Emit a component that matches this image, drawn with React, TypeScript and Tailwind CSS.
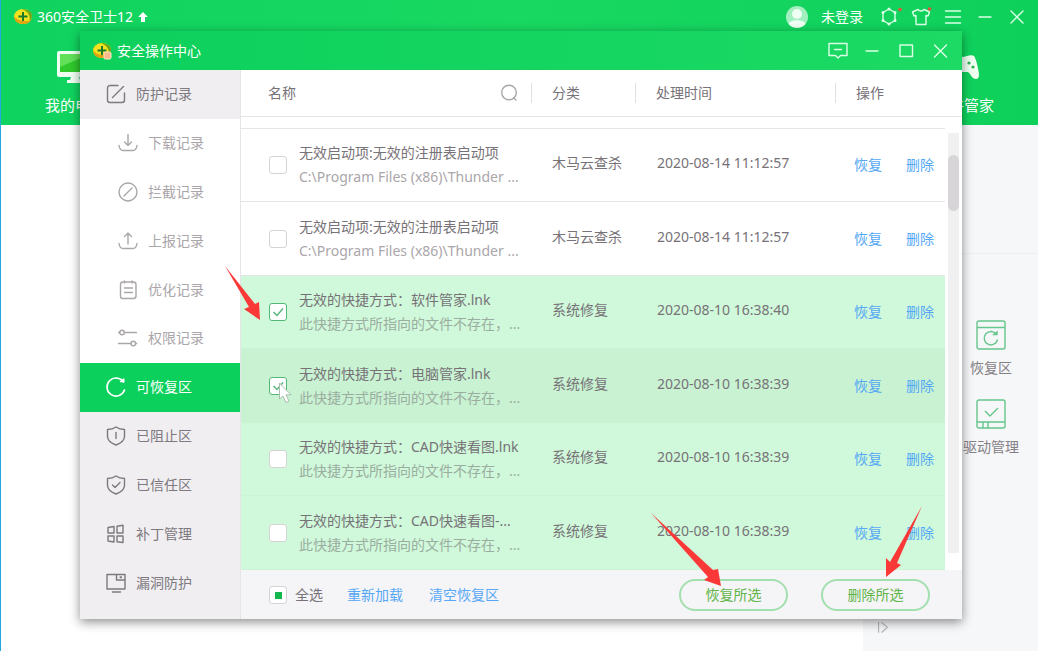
import { useState, type ReactNode } from 'react';
import clsx from 'clsx';

type IconProps = { children: ReactNode; className?: string };

function Icon({ children, className = 'size-5' }: IconProps) {
    return (
        <svg
            viewBox="0 0 20 20"
            fill="none"
            stroke="currentColor"
            strokeWidth="1.4"
            strokeLinecap="round"
            strokeLinejoin="round"
            className={clsx('shrink-0 overflow-visible', className)}
            aria-hidden="true"
        >
            {children}
        </svg>
    );
}

function Logo({ badge = false }: { badge?: boolean }) {
    return (
        <svg viewBox="0 0 20 18" className="h-[18px] w-5 shrink-0" aria-hidden="true">
            <ellipse cx="10" cy="8.5" rx="9" ry="7.5" fill="#f5e21c" />
            <path d="M1 8c0 5 4 8 9 8 4 0 7-1.500 8.500-4.500C15 14 5 14 1 8z" fill="#e0a410" />
            <path d="M9 1c5 0 10 2 10 7 0 2-1 4-2.500 5C18 7 14 3 9 1z" fill="#6ea51a" />
            <path d="M10 4v9M5.500 8.500h9" stroke="#1d7a2c" strokeWidth="2" />
            {badge && <rect x="12" y="10" width="7" height="7" rx="1.500" fill="#ffb98a" stroke="#fde6c8" />}
        </svg>
    );
}

const menu = [
    {
        label: '防护记录',
        icon: <><path d="M12 1.500H4A2.500 2.500 0 0 0 1.500 4v12A2.500 2.500 0 0 0 4 18.500h12a2.500 2.500 0 0 0 2.500-2.500V9M6.500 13.500l11-11" /></>,
    },
    {
        label: '下载记录',
        sub: true,
        icon: <><path d="M10 1.500v11M6.500 9l3.500 3.500L13.500 9M1 12.500c.5 3 2 5 4 5h10c2 0 3.500-2 4-5" /></>,
    },
    {
        label: '拦截记录',
        sub: true,
        icon: <><circle cx="10" cy="10" r="9" /><path d="M6 14l8-8" /></>,
    },
    {
        label: '上报记录',
        sub: true,
        icon: <><path d="M10 13V2M6.500 5.500L10 2l3.500 3.500M1 12.500c.5 3 2 5 4 5h10c2 0 3.500-2 4-5" /></>,
    },
    {
        label: '优化记录',
        sub: true,
        icon: <><rect x="2.500" y="2" width="15.500" height="16.500" rx="2.500" /><path d="M6.500 1v2M14 1v2M6.500 8h8M6.500 12.500h8" /></>,
    },
    {
        label: '权限记录',
        sub: true,
        icon: <><circle cx="4" cy="4.500" r="2.300" /><path d="M6.300 4.500H18.500M.5 4.500h1.200M.5 15.500H13M17.600 15.500h1" /><circle cx="15.300" cy="15.500" r="2.300" /></>,
    },
    {
        label: '可恢复区',
        icon: <><path d="M17.500 5A9 9 0 1 0 18.500 13" strokeWidth="1.700" /><path d="M14.500 4.500h3.300V2z" fill="currentColor" /></>,
    },
    {
        label: '已阻止区',
        icon: <><path d="M10 1c2.500 1.800 5.500 2.500 8.500 2.500v7c0 4-3.500 6.500-8.500 8.500-5-2-8.500-4.500-8.500-8.500v-7C4.500 3.500 7.500 2.800 10 1z" /><path d="M10 6.500v6" /></>,
    },
    {
        label: '已信任区',
        icon: <><path d="M10 1c2.500 1.800 5.500 2.500 8.500 2.500v7c0 4-3.500 6.500-8.500 8.500-5-2-8.500-4.500-8.500-8.500v-7C4.500 3.500 7.500 2.800 10 1z" /><path d="M6.500 10l2.500 2.500 5-5" /></>,
    },
    {
        label: '补丁管理',
        icon: <><path d="M2 3.500L8 2.500v6.500H2zM11 2.300l6-1v7.700h-6zM2 12h6v6l-6-1zM11 12h6v6.500l-6-.8z" /></>,
    },
    {
        label: '漏洞防护',
        icon: <><path d="M1 1.500h18v14.500H1zM10.500 1.500v5.500H19M6.500 19h8" /><path d="M14.500 4.200h.6" strokeWidth="2" /></>,
    },
];

const rows = [
    { title: '无效启动项:无效的注册表启动项', detail: 'C:\\Program Files (x86)\\Thunder ...', kind: '木马云查杀', time: '2020-08-14 11:12:57' },
    { title: '无效启动项:无效的注册表启动项', detail: 'C:\\Program Files (x86)\\Thunder ...', kind: '木马云查杀', time: '2020-08-14 11:12:57' },
    { title: '无效的快捷方式：软件管家.lnk', detail: '此快捷方式所指向的文件不存在，...', kind: '系统修复', time: '2020-08-10 16:38:40', marked: true },
    { title: '无效的快捷方式：电脑管家.lnk', detail: '此快捷方式所指向的文件不存在，...', kind: '系统修复', time: '2020-08-10 16:38:39', marked: true, hover: true },
    { title: '无效的快捷方式：CAD快速看图.lnk', detail: '此快捷方式所指向的文件不存在，...', kind: '系统修复', time: '2020-08-10 16:38:39', marked: true },
    { title: '无效的快捷方式：CAD快速看图-...', detail: '此快捷方式所指向的文件不存在，...', kind: '系统修复', time: '2020-08-10 16:38:39', marked: true },
];

function CheckBox({ label, checked, onChange }: { label: string; checked: boolean; onChange: () => void }) {
    return (
        <span className="relative size-[18px] shrink-0">
            <input
                type="checkbox"
                aria-label={label}
                checked={checked}
                onChange={onChange}
                className="peer block size-[18px] appearance-none rounded-[3px] border border-[#d6d3d6] bg-white checked:border-[#52b876]"
            />
            <svg viewBox="0 0 18 18" className="pointer-events-none absolute inset-0 hidden size-[18px] peer-checked:block" fill="none" stroke="#5cb57c" strokeWidth="1.500">
                <path d="M4.500 9l3.500 3.500 6-7" />
            </svg>
        </span>
    );
}

function MainWindow() {
    return (
        <div className="flex min-h-screen flex-col border-l border-[#22a9e0] bg-white">
            <header className="flex h-[125px] flex-col justify-between bg-linear-to-r from-[#0fd35f] via-[#18d861] to-[#0dd05b] pb-[10px] text-white">
                <div className="flex h-[34px] items-center justify-between pr-[11px] pl-3">
                    <div className="flex items-center gap-1 text-sm">
                        <Logo />
                        <span>360安全卫士12</span>
                        <svg viewBox="0 0 12 12" className="size-3" fill="currentColor" aria-hidden="true"><path d="M6 1l5 5H8v5H4V6H1z" /></svg>
                    </div>
                    <div className="flex items-center text-sm">
                        <svg viewBox="0 0 24 24" className="mr-3 size-6" aria-hidden="true">
                            <circle cx="12" cy="12" r="11" fill="#a2efbf" />
                            <circle cx="12" cy="9" r="5" fill="#effff4" />
                            <path d="M3.500 19c1.500-5 15.500-5 17 0a11.500 11.500 0 0 1-17 0z" fill="#effff4" />
                        </svg>
                        <a href="#login" className="mr-4">未登录</a>
                        <div className="flex items-center gap-3 text-[#dcffe6]">
                            <button type="button" aria-label="消息">
                                <Icon>
                                    <path d="M10 2l6 3.500v8L10 17l-6-3.500v-8z" />
                                    <path d="M10 2v.1M10 17v.1M16 5.500v.1M4 5.500v.1M16 13.500v.1M4 13.500v.1" strokeWidth="3" />
                                    <circle cx="21" cy="2.500" r="1.800" fill="#e6553c" stroke="none" />
                                </Icon>
                            </button>
                            <button type="button" aria-label="皮肤">
                                <Icon>
                                    <path d="M7 2.500c1.500 2 4.500 2 6 0L18.500 5 17 9l-2-.5V17.500H5V8.500L3 9 1.500 5z" />
                                    <circle cx="18.500" cy="2" r="1.800" fill="#e6553c" stroke="none" />
                                </Icon>
                            </button>
                            <button type="button" aria-label="菜单"><Icon><path d="M2.500 4h15M2.500 10h15M2.500 16h15" /></Icon></button>
                            <button type="button" aria-label="最小化"><Icon><path d="M4 10h12" /></Icon></button>
                            <button type="button" aria-label="关闭"><Icon><path d="M4 4l12 12M16 4L4 16" /></Icon></button>
                        </div>
                    </div>
                </div>
                <nav className="flex justify-between px-11 text-[15px] leading-5">
                    <a href="#computer" className="flex flex-col items-center gap-3">
                        <svg viewBox="0 0 36 32" className="h-8 w-9" aria-hidden="true">
                            <rect x="0" y="0" width="36" height="26" rx="2" fill="#effff2" />
                            <rect x="3" y="3" width="30" height="18" fill="#2fc92d" />
                            <path d="M3 3h30L3 16z" fill="#62e05a" />
                            <path d="M14 26h8l1 3h3v3H10v-3h3z" fill="#effff2" />
                        </svg>
                        <span>我的电脑</span>
                    </a>
                    <a href="#software" className="flex flex-col items-center gap-3">
                        <svg viewBox="0 0 32 32" className="size-8" aria-hidden="true">
                            <path d="M3 8C4 5 10 6 14 6s9-3 12-1c2 2 5 15 5 19 0 6-6 5-9-1l-2-2h-8l-2 2c-3 6-9 7-9 1C1 20 2 12 3 8z" fill="#effff2" />
                            <circle cx="21" cy="12" r="1.600" fill="#31b457" />
                            <circle cx="25" cy="16" r="1.600" fill="#31b457" />
                        </svg>
                        <span>软件管家</span>
                    </a>
                </nav>
            </header>
            <div className="flex flex-1 justify-end">
                <aside className="flex w-[175px] flex-col bg-[#f6f7f9]">
                    <div className="h-[129px] border-b border-[#eceef0]" />
                    <div className="flex flex-1 flex-col items-end gap-[21px] pt-[66px] pr-[19px] text-sm leading-5 text-[#858085]">
                        <a href="#restore" className="flex w-14 flex-col items-center gap-2">
                            <svg viewBox="0 0 30 30" className="size-[30px]" fill="none" stroke="#66c58b" strokeWidth="1.400" aria-hidden="true">
                                <rect x="1" y="1" width="28" height="28" rx="2" />
                                <path d="M1 7.500h28M20.500 14.500a6.700 6.700 0 1 0 1 5" />
                                <path d="M18 14.500h3v-2.500z" fill="#66c58b" />
                            </svg>
                            恢复区
                        </a>
                        <a href="#drivers" className="flex w-14 flex-col items-center gap-2">
                            <svg viewBox="0 0 30 30" className="size-[30px]" fill="none" stroke="#66c58b" strokeWidth="1.400" aria-hidden="true">
                                <rect x="1" y="1" width="28" height="28" rx="2" />
                                <path d="M1 23h28M7 23v6M12 23v6M9 12l5 5 8-8" />
                            </svg>
                            驱动管理
                        </a>
                    </div>
                    <button type="button" aria-label="展开" className="mb-[14px] ml-[14px] text-[#b5b5b5]">
                        <Icon className="size-4"><path d="M2 2v12M6 2l7 6-7 6" /></Icon>
                    </button>
                </aside>
            </div>
        </div>
    );
}

function Sidebar() {
    return (
        <nav className="flex w-[161px] shrink-0 flex-col border-r border-[#e6e4e6] bg-[#f0eef1] pb-3 text-sm">
            {menu.map(item => (
                <a
                    key={item.label}
                    href={`#${item.label}`}
                    className={clsx(
                        'flex flex-1 items-center gap-[10px]',
                        item.sub ? 'bg-white pl-[38px] text-[#aaa6aa]' : 'pl-[26px]',
                        item.label === '可恢复区' ? 'bg-[#0bd15c] text-white' : !item.sub && 'text-[#7d797e]'
                    )}
                >
                    <Icon>{item.icon}</Icon>
                    {item.label}
                </a>
            ))}
        </nav>
    );
}

function RecordTable() {
    const [checked, setChecked] = useState([false, false, true, true, false, false]);
    const toggle = (index: number) => setChecked(checked.map((value, i) => (i === index ? !value : value)));

    return (
        <div className="relative">
            <table className="w-full table-fixed border-separate border-spacing-0 text-left text-sm text-[#777277]">
                <colgroup>
                    <col />
                    <col className="w-[104px]" />
                    <col className="w-[200px]" />
                    <col className="w-[109px]" />
                    <col className="w-[17px]" />
                </colgroup>
                <thead>
                    <tr className="h-[47px]">
                        <th className="border-b border-[#e6e4e6] p-0 font-normal">
                            <div className="flex h-5 items-center justify-between border-r border-[#e2e0e2] pr-3 pl-[27px]">
                                名称
                                <button type="button" aria-label="搜索" className="text-[#aaa6aa]">
                                    <Icon><circle cx="10" cy="9.500" r="7.300" /><path d="M14.500 15l2.500 2" /></Icon>
                                </button>
                            </div>
                        </th>
                        <th className="border-b border-[#e6e4e6] p-0 font-normal">
                            <div className="h-5 border-r border-[#e2e0e2] pl-5">分类</div>
                        </th>
                        <th className="border-b border-[#e6e4e6] p-0 font-normal">
                            <div className="h-5 border-r border-[#e2e0e2] pl-5">处理时间</div>
                        </th>
                        <th className="border-b border-[#e6e4e6] p-0 pl-5 font-normal">操作</th>
                        <td className="border-b border-[#e6e4e6] p-0" />
                    </tr>
                </thead>
                <tbody>
                    <tr className="h-3">
                        <td colSpan={4} className="border-b border-[#e6e4e6] p-0" />
                    </tr>
                    {rows.map((row, index) => {
                        const line = clsx('border-b p-0', row.marked ? 'border-[#cbf3d5]' : 'border-[#e6e4e6]', row.hover ? 'bg-[#c8f2d2]' : row.marked && 'bg-[#cff9da]');
                        return (
                            <tr key={index} className={index % 2 ? 'h-[74px]' : 'h-[73px]'}>
                                <td className={line}>
                                    <div className="flex items-center gap-3 pl-7 leading-6 whitespace-nowrap">
                                        <CheckBox label={row.title} checked={checked[index]} onChange={() => toggle(index)} />
                                        <div>
                                            <p>{row.title}</p>
                                            <p className={row.marked ? 'text-[#9bada0]' : 'text-[#aaa6aa]'}>{row.detail}</p>
                                        </div>
                                    </div>
                                </td>
                                <td className={line}><p className="pb-1 pl-5">{row.kind}</p></td>
                                <td className={line}><p className="pb-1 pl-[21px]">{row.time}</p></td>
                                <td className={line}>
                                    <div className="flex gap-6 pl-[18px] text-[#55a8f5]">
                                        <button type="button">恢复</button>
                                        <button type="button">删除</button>
                                    </div>
                                </td>
                            </tr>
                        );
                    })}
                </tbody>
            </table>
            <div className="absolute top-[63px] right-[3px] bottom-[17px] w-[11px] bg-[#f1f0f1] pt-[22px]">
                <div className="h-14 rounded-full bg-[#d7d5d8]" />
            </div>
        </div>
    );
}

function OperationCenter() {
    return (
        <section className="absolute top-[31px] right-[76px] left-20 bg-white shadow-[0_3px_10px_rgba(0,0,0,0.45)]">
            <header className="flex h-[39px] items-center justify-between bg-linear-to-r from-[#0dd05c] via-[#13d560] to-[#1cda64] pr-3 pl-3 text-sm text-white">
                <div className="flex items-center gap-[5px]">
                    <Logo badge />
                    <h1>安全操作中心</h1>
                </div>
                <div className="flex items-center gap-[14px] text-[#dcffe6]">
                    <button type="button" aria-label="反馈"><Icon><path d="M1 2.500h18v12h-6.500L10 17l-2.500-2.500H1zM6.500 8.500h7" /></Icon></button>
                    <button type="button" aria-label="最小化"><Icon><path d="M4 10h12" /></Icon></button>
                    <button type="button" aria-label="最大化"><Icon><rect x="4" y="4" width="12.500" height="11.500" /></Icon></button>
                    <button type="button" aria-label="关闭"><Icon><path d="M4.500 4l12 12M16.500 4l-12 12" /></Icon></button>
                </div>
            </header>
            <div className="flex">
                <Sidebar />
                <div className="min-w-0 flex-1">
                    <RecordTable />
                    <footer className="flex h-[49px] items-center bg-[#f5f4f7] pr-8 pl-7 text-sm text-[#777277]">
                        <label className="flex items-center gap-2">
                            <span className="relative size-[18px]">
                                <input type="checkbox" className="block size-[18px] appearance-none rounded-[3px] border border-[#d6d3d6] bg-white" />
                                <span className="pointer-events-none absolute top-[6px] left-[6px] size-[7px] bg-[#12b84e]" />
                            </span>
                            全选
                        </label>
                        <button type="button" className="ml-6 text-[#55a8f5]">重新加载</button>
                        <button type="button" className="ml-[26px] text-[#55a8f5]">清空恢复区</button>
                        <div className="ml-auto flex gap-[33px] text-[#5fb548]">
                            <button type="button" className="h-8 w-[109px] rounded-full border-2 border-[#a3dfaf]">恢复所选</button>
                            <button type="button" className="h-8 w-[109px] rounded-full border-2 border-[#a3dfaf]">删除所选</button>
                        </div>
                    </footer>
                </div>
            </div>
        </section>
    );
}

export default function App() {
    return (
        <main className="relative min-h-screen overflow-hidden font-['Noto_Sans','Noto_Sans_CJK_SC',sans-serif]">
            <MainWindow />
            <OperationCenter />

            {/* pointer and guide arrows above both windows */}
            <svg viewBox="0 0 16 22" className="pointer-events-none absolute top-[382px] left-[278px] h-[22px] w-4" aria-hidden="true">
                <path d="M1.500 1v16l3.500-3 3 6.500 3-1.300-3-6.400h5z" fill="#fff" stroke="#a9bfae" strokeWidth="1" />
            </svg>
            <svg viewBox="0 0 36 55" className="pointer-events-none absolute top-[266px] left-[225px] h-[55px] w-9" fill="#fb3838" aria-hidden="true">
                <path d="M0 0l30 38 4-2 1 18-16-11 5-2z" />
            </svg>
            <svg viewBox="0 0 70 74" className="pointer-events-none absolute top-[513px] left-[651px] h-[74px] w-[70px]" fill="#fb3838" aria-hidden="true">
                <path d="M0 0l62 57 5-1 3 17-17-6 4-3z" />
            </svg>
            <svg viewBox="0 0 36 72" className="pointer-events-none absolute top-[506px] left-[886px] h-[72px] w-9" fill="#fb3838" aria-hidden="true">
                <path d="M36 0L4 56l-4-4v19l15-12-4-2z" />
            </svg>
        </main>
    );
}
